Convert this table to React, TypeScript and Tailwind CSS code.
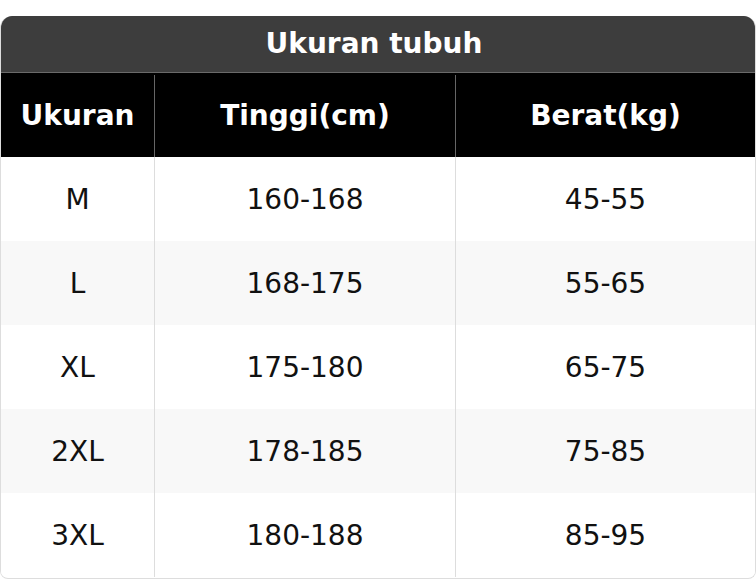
import React from "react";

const rows = [
  ["M", "160-168", "45-55"],
  ["L", "168-175", "55-65"],
  ["XL", "175-180", "65-75"],
  ["2XL", "178-185", "75-85"],
  ["3XL", "180-188", "85-95"],
];

export default function App() {
  return (
    <div className="w-[756px] h-[580px] bg-white pt-4" style={{ fontFamily: '"DejaVu Sans", sans-serif' }}>
      <div className="w-[756px] h-[563px] rounded-t-[12px] rounded-b-[8px] border border-t-0 border-[#dddddd] overflow-hidden flex flex-col">
        <div className="h-[57px] bg-[#3d3d3d] border-b border-[#6a6a6a] flex items-center justify-center pr-2 text-white font-bold text-[28px] shrink-0">
          Ukuran tubuh
        </div>
        <div className="h-[84px] bg-black flex text-white font-bold text-[28px] shrink-0 pt-[2px]">
          <div className="w-[154px] flex items-center justify-center border-r border-[#666]">Ukuran</div>
          <div className="w-[301px] flex items-center justify-center border-r border-[#666]">Tinggi(cm)</div>
          <div className="flex-1 flex items-center justify-center">Berat(kg)</div>
        </div>
        {rows.map((r, i) => (
          <div key={i} className={`h-[84px] flex text-[28px] text-[#111] shrink-0 ${i % 2 === 1 ? "bg-[#f8f8f8]" : "bg-white"}`}>
            <div className="w-[154px] flex items-center justify-center pt-[2px] border-r border-[#dddddd]">{r[0]}</div>
            <div className="w-[301px] flex items-center justify-center pt-[2px] border-r border-[#dddddd]">{r[1]}</div>
            <div className="flex-1 flex items-center justify-center pt-[2px]">{r[2]}</div>
          </div>
        ))}
      </div>
    </div>
  );
}
